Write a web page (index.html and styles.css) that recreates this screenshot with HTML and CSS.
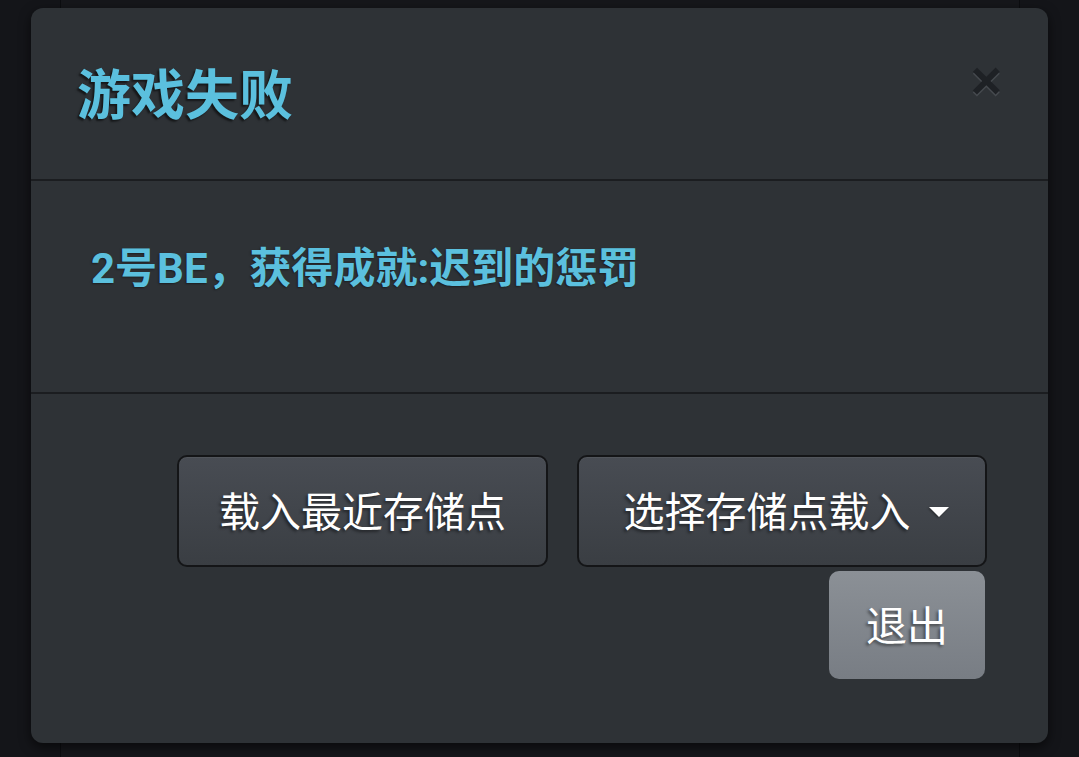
FILE: index.html
```html
<!DOCTYPE html>
<html lang="zh-CN">
<head>
<meta charset="utf-8">
<title>游戏失败</title>
<link rel="stylesheet" href="styles.css">
</head>
<body>
<div class="backdrop">
  <div class="page"></div>
  <div class="modal">
    <div class="modal-header">
      <span class="close">&times;</span>
      <h4 class="modal-title">游戏失败</h4>
    </div>
    <div class="modal-body">
      <p class="message">2号BE，获得成就:迟到的惩罚</p>
    </div>
    <div class="modal-footer">
      <button class="btn btn-dark btn-load">载入最近存储点</button>
      <button class="btn btn-dark btn-drop">选择存储点载入 <span class="caret"></span></button>
      <button class="btn btn-gray">退出</button>
    </div>
  </div>
</div>
</body>
</html>
```

FILE: styles.css
```css
* { box-sizing: border-box; }
html, body {
  margin: 0;
  padding: 0;
  width: 1079px;
  height: 757px;
  overflow: hidden;
  background: #141519;
  font-family: Roboto, "Liberation Sans", "Noto Sans CJK SC", sans-serif;
}
.backdrop {
  position: relative;
  width: 1079px;
  height: 757px;
  padding: 8px 31px 0 31px;
}
.page {
  position: absolute;
  left: 60px;
  top: 0;
  width: 960px;
  height: 757px;
  border-left: 1px solid #0c0d10;
  border-right: 1px solid #0c0d10;
  background: #16171b;
}
.modal {
  position: relative;
  width: 1017px;
  height: 735px;
  background: #2e3236;
  border-radius: 12px;
  box-shadow: 0 4px 12px rgba(0,0,0,0.6);
  display: flex;
  flex-direction: column;
}
.modal-header {
  height: 173px;
  padding: 52px 46px 0 46px;
  border-bottom: 2px solid #1b1d20;
}
.modal-title {
  margin: 0;
  font-family: "Noto Sans CJK SC", sans-serif;
  font-weight: 700;
  font-size: 54px;
  line-height: 64px;
  color: #5bc0de;
  text-shadow: -2px 2px 2px rgba(0,0,0,0.55);
}
.close {
  float: right;
  margin-top: -8px;
  margin-right: 0;
  font-family: "Liberation Sans", sans-serif;
  font-weight: 700;
  font-size: 54px;
  line-height: 56px;
  color: #1e2125;
  text-shadow: 0 2px 0 #464a4f;
}
.modal-body {
  height: 213px;
  padding: 63px 60px 0 60px;
  border-bottom: 2px solid #1b1d20;
}
.message {
  margin: 0;
  font-family: Roboto, "Noto Sans CJK SC", sans-serif;
  font-weight: 700;
  font-size: 42px;
  line-height: 50px;
  color: #5bc0de;
  text-shadow: -1px 1px 2px rgba(0,0,0,0.4);
}
.modal-footer {
  flex: 1;
  padding: 61px 61px 0 60px;
  display: flex;
  flex-wrap: wrap;
  justify-content: flex-end;
  align-content: flex-start;
  column-gap: 29px;
  row-gap: 4px;
}
.btn {
  height: 112px;
  border-radius: 10px;
  font-family: "Noto Sans CJK SC", sans-serif;
  font-size: 41px;
  font-weight: 400;
  color: #ffffff;
  text-shadow: -2px 2px 3px rgba(0,0,0,0.45);
  cursor: pointer;
  display: inline-flex;
  align-items: center;
  justify-content: center;
  padding: 0 0 4px 0;
}
.btn-dark {
  border: 2px solid #141517;
  background: linear-gradient(#484c53, #3a3e43);
  box-shadow: inset 0 1px 0 rgba(255,255,255,0.05);
}
.btn-load { width: 371px; }
.btn-drop { width: 410px; padding-left: 8px; }
.caret {
  display: inline-block;
  width: 0;
  height: 0;
  margin-left: 18px;
  margin-top: 6px;
  border-left: 10px solid transparent;
  border-right: 10px solid transparent;
  border-top: 10px solid #ffffff;
  filter: drop-shadow(-1px 1px 1px rgba(0,0,0,0.4));
}
.btn-gray {
  width: 156px;
  height: 108px;
  margin-right: 2px;
  border: none;
  background: linear-gradient(#8b9096, #787d84);
}
```
